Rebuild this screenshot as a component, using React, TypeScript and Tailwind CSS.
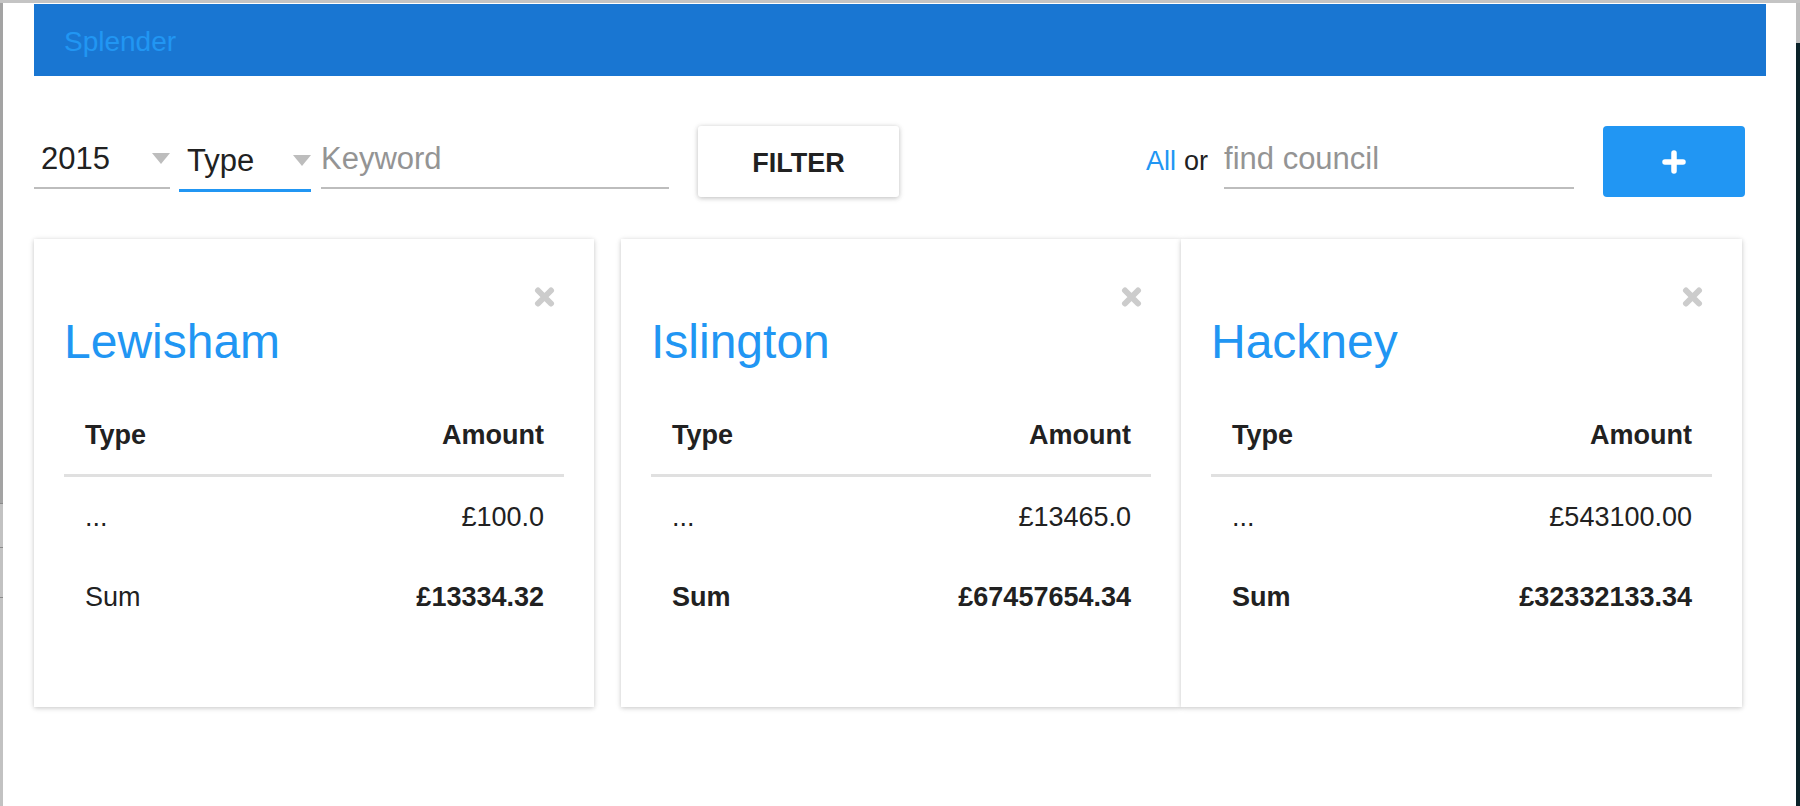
import React from "react";

type Row = { type: string; amount: string; bold?: boolean; boldType?: boolean };

interface Council {
  name: string;
  rows: Row[];
}

const councils: Council[] = [
  {
    name: "Lewisham",
    rows: [
      { type: "...", amount: "£100.0" },
      { type: "Sum", amount: "£13334.32", bold: true },
    ],
  },
  {
    name: "Islington",
    rows: [
      { type: "...", amount: "£13465.0" },
      { type: "Sum", amount: "£67457654.34", bold: true, boldType: true },
    ],
  },
  {
    name: "Hackney",
    rows: [
      { type: "...", amount: "£543100.00" },
      { type: "Sum", amount: "£32332133.34", bold: true, boldType: true },
    ],
  },
];

const CloseIcon = () => (
  <svg width="21" height="20" viewBox="0 0 21 20">
    <path
      d="M4 3.5 L17 16.5 M17 3.5 L4 16.5"
      stroke="#cccccc"
      strokeWidth="6"
      strokeLinecap="round"
    />
  </svg>
);

const Arrow = () => (
  <span className="w-0 h-0 border-l-[9px] border-r-[9px] border-t-[11px] border-l-transparent border-r-transparent border-t-[#bdbdbd]" />
);

const CouncilCard: React.FC<{ council: Council; className?: string }> = ({
  council,
  className,
}) => (
  <div
    className={
      "w-[560px] h-[468px] bg-white px-[30px] shadow-[0_1px_6px_rgba(0,0,0,0.12),0_1px_4px_rgba(0,0,0,0.12)] " +
      (className ?? "")
    }
  >
    <div className="flex justify-end pt-[48px] pr-[9px] h-[68px]">
      <CloseIcon />
    </div>
    <h2 className="mt-[11px] h-[48px] leading-none text-[48px] text-[#2196f3]">
      {council.name}
    </h2>
    <div className="mt-[31px]">
      <div className="flex h-[80px] items-center justify-between pl-[21px] pr-[20px] text-[27px] font-bold border-b-[3px] border-[#e0e0e0]">
        <span>Type</span>
        <span>Amount</span>
      </div>
      {council.rows.map((r, i) => (
        <div
          key={i}
          className="flex h-[80px] items-center justify-between pl-[21px] pr-[20px] text-[27px]"
        >
          <span className={r.boldType ? "font-bold" : ""}>{r.type}</span>
          <span className={r.bold ? "font-bold" : ""}>{r.amount}</span>
        </div>
      ))}
    </div>
  </div>
);

export default function App() {
  return (
    <div className="w-[1800px] h-[806px] flex flex-col bg-white overflow-hidden font-['Liberation_Sans',Arial,sans-serif] text-[#212121]">
      <div className="h-[3px] bg-[#c4c4c4] shrink-0" />
      <div className="flex flex-1">
        <div className="w-[3px] flex flex-col shrink-0">
          <div className="h-[500px] bg-[#a3a3a3]" />
          <div className="h-[44px] bg-[#c2c2c2] border-t border-[#8a8a8a]" />
          <div className="h-[50px] bg-[#c2c2c2] border-t border-[#8a8a8a]" />
          <div className="flex-1 bg-[#c2c2c2] border-t border-[#8a8a8a]" />
        </div>

        <main className="flex-1 pt-[1px] pl-[31px]">
          <header className="w-[1732px] h-[72px] bg-[#1976d2] flex items-center pl-[30px] pt-[3px]">
            <span className="text-[28px] leading-none text-[#2196f3]">Splender</span>
          </header>

          <div className="mt-[50px] h-[71px] flex items-start">
            <div className="w-[136px] h-[71px] flex flex-col justify-end pb-[8px]">
              <div className="h-[36px] flex items-center justify-between pl-[7px]">
                <span className="text-[31px] leading-none">2015</span>
                <Arrow />
              </div>
              <div className="mt-[11px] h-[2px] bg-[#bdbdbd]" />
            </div>

            <div className="ml-[9px] w-[132px] h-[71px] flex flex-col justify-end pb-[5px]">
              <div className="h-[36px] flex items-center justify-between pl-[8px]">
                <span className="text-[31px] leading-none">Type</span>
                <Arrow />
              </div>
              <div className="mt-[11px] h-[3px] bg-[#2196f3]" />
            </div>

            <div className="ml-[10px] w-[348px] h-[71px] flex flex-col justify-end pb-[8px]">
              <div className="h-[36px] flex items-center">
                <span className="text-[31px] leading-none text-[#949494]">Keyword</span>
              </div>
              <div className="mt-[11px] h-[2px] bg-[#bdbdbd]" />
            </div>

            <button className="ml-[29px] w-[201px] h-[71px] pt-[3px] bg-white rounded-[3px] shadow-[0_1px_6px_rgba(0,0,0,0.14),0_1px_4px_rgba(0,0,0,0.14)] text-[27px] font-bold text-[#212121]">
              FILTER
            </button>

            <div className="ml-[247px] h-[71px] flex items-end pb-[22px] text-[27px] leading-none">
              <span className="text-[#2196f3]">All</span>
              <span className="ml-[8px]">or</span>
            </div>

            <div className="ml-[16px] w-[350px] h-[71px] flex flex-col justify-end pb-[8px]">
              <div className="h-[36px] flex items-center">
                <span className="text-[31px] leading-none text-[#949494]">find council</span>
              </div>
              <div className="mt-[11px] h-[2px] bg-[#bdbdbd]" />
            </div>

            <button className="ml-[29px] w-[142px] h-[71px] bg-[#2196f3] rounded-[4px] flex items-center justify-center">
              <svg width="24" height="24" viewBox="0 0 24 24">
                <path
                  d="M12 3 V21 M3 12 H21"
                  stroke="#ffffff"
                  strokeWidth="5.5"
                  strokeLinecap="round"
                />
              </svg>
            </button>
          </div>

          <div className="mt-[42px] flex">
            <CouncilCard council={councils[0]} />
            <CouncilCard council={councils[1]} className="ml-[27px]" />
            <CouncilCard council={councils[2]} className="w-[561px]" />
          </div>
        </main>

        <div className="w-[4px] flex flex-col shrink-0">
          <div className="h-[40px] bg-[#bdbdbd]" />
          <div className="flex-1 bg-[#0b2329]" />
        </div>
      </div>
    </div>
  );
}
